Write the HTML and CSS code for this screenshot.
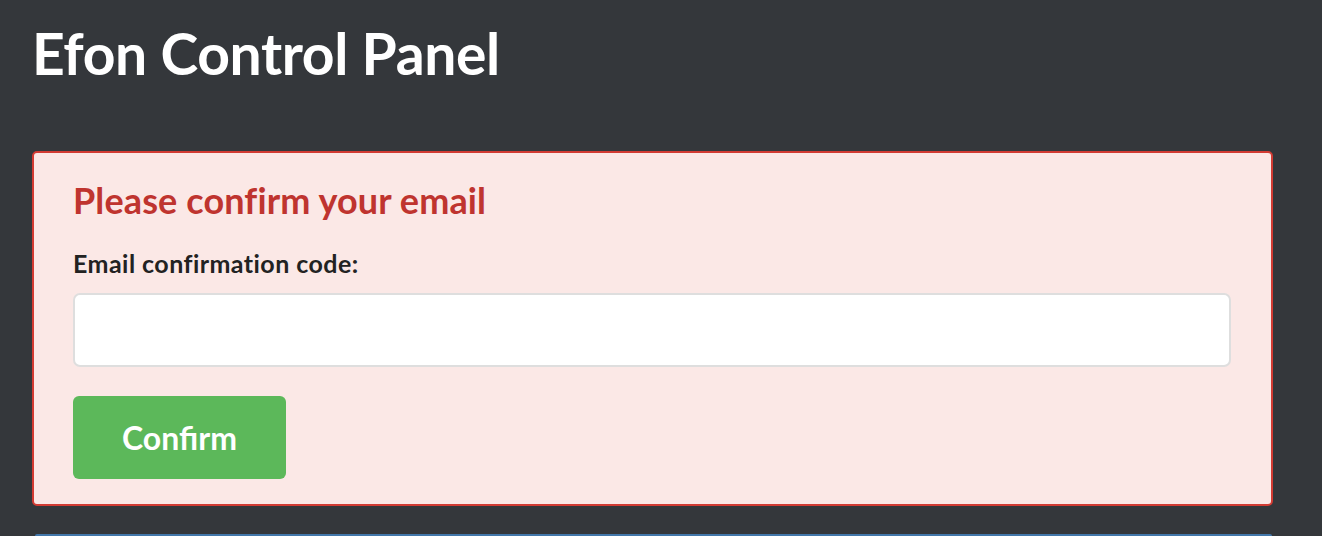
FILE: index.html
```html
<!DOCTYPE html>
<html lang="en">
<head>
<meta charset="utf-8">
<title>Efon Control Panel</title>
<link rel="stylesheet" href="styles.css">
</head>
<body>
<div class="page">
  <h1 class="site-title">Efon Control Panel</h1>
  <section class="alert-card">
    <h2 class="alert-title">Please confirm your email</h2>
    <form class="confirm-form">
      <label class="field-label" for="code">Email confirmation code:</label>
      <input class="field-input" id="code" type="text">
      <button class="btn-confirm" type="button">Confirm</button>
    </form>
  </section>
  <div class="next-panel"></div>
</div>
</body>
</html>
```

FILE: styles.css
```css
html, body {
  margin: 0;
  padding: 0;
  background: #34373b;
  height: 100%;
  overflow: hidden;
}

.page {
  font-family: Lato, "Open Sans", sans-serif;
  padding: 19px 49px 0 32px;
}

.site-title {
  margin: 0;
  font-size: 57px;
  font-weight: 700;
  line-height: 1.2;
  color: #ffffff;
  letter-spacing: -0.35px;
}

.alert-card {
  margin-top: 64px;
  background: #fbe8e6;
  border: 2px solid #d23b33;
  border-radius: 5px;
  padding: 26px 40px 25px 39px;
}

.alert-title {
  margin: 0;
  font-size: 36px;
  font-weight: 700;
  line-height: 1.2;
  color: #bf342f;
  letter-spacing: 0.12px;
}

.confirm-form {
  display: flex;
  flex-direction: column;
  align-items: flex-start;
  margin-top: 26px;
}

.field-label {
  font-size: 25px;
  font-weight: 700;
  line-height: 1.15;
  color: #222222;
  letter-spacing: 0.45px;
}

.field-input {
  box-sizing: border-box;
  align-self: stretch;
  margin: 16px 0 0 0;
  height: 74px;
  border: 2px solid #dedede;
  border-radius: 7px;
  background: #ffffff;
  font-family: Lato, sans-serif;
  font-size: 24px;
  padding: 0 16px;
  outline: none;
}

.btn-confirm {
  margin-top: 29px;
  width: 213px;
  height: 83px;
  border: none;
  border-radius: 6px;
  background: #5cb85a;
  color: #ffffff;
  font-family: Lato, sans-serif;
  font-size: 32px;
  font-weight: 700;
  cursor: pointer;
}

.next-panel {
  margin: 28px 1px 0 3px;
  height: 0;
  border-top: 2px solid #4277aa;
  border-radius: 4px 4px 0 0;
}
```
